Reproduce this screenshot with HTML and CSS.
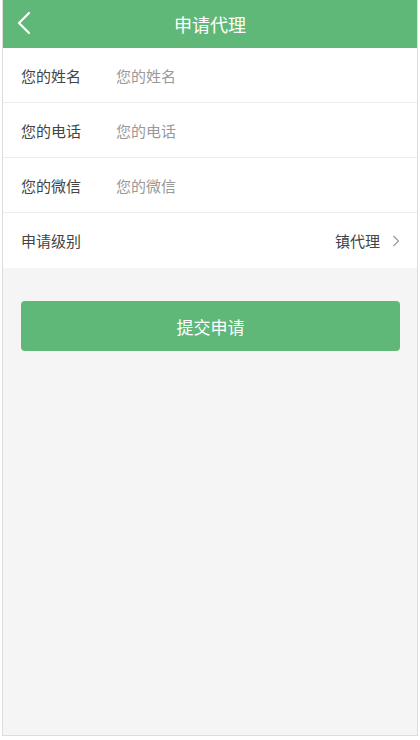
FILE: index.html
```html
<!DOCTYPE html>
<html lang="zh-CN">
<head>
<meta charset="utf-8">
<title>申请代理</title>
<link rel="stylesheet" href="styles.css">
</head>
<body>
<div class="page">
  <header class="topbar">
    <a class="back" aria-label="返回">
      <svg width="14" height="24" viewBox="0 0 14 24"><path d="M12 2 L2 12 L12 22" fill="none" stroke="#fff" stroke-width="2.2" stroke-linecap="round" stroke-linejoin="round"/></svg>
    </a>
    <h1 class="title">申请代理</h1>
  </header>
  <div class="form">
    <div class="row"><span class="label">您的姓名</span><span class="ph">您的姓名</span></div>
    <div class="row"><span class="label">您的电话</span><span class="ph">您的电话</span></div>
    <div class="row"><span class="label">您的微信</span><span class="ph">您的微信</span></div>
    <div class="row last"><span class="label">申请级别</span><span class="value">镇代理</span>
      <svg class="arrow" width="8" height="12" viewBox="0 0 8 12"><path d="M1.5 1 L6.5 6 L1.5 11" fill="none" stroke="#999" stroke-width="1.2"/></svg>
    </div>
  </div>
  <div class="actions">
    <button class="submit">提交申请</button>
  </div>
</div>
</body>
</html>
```
FILE: styles.css
```css
html, body {
  margin: 0;
  padding: 0;
  background: #fff;
}
body {
  font-family: "Microsoft YaHei", "Noto Sans CJK SC", "Noto Sans", sans-serif;
}
.page {
  margin: 0 2px;
  border: 1px solid #ddd;
  border-top: none;
  box-sizing: border-box;
  height: 736px;
  background: #f5f5f5;
}
.topbar {
  position: relative;
  height: 48px;
  background: #5fb878;
  display: flex;
  align-items: center;
  justify-content: center;
}
.back {
  position: absolute;
  left: 14px;
  top: 11px;
  display: block;
}
.title {
  margin: 0;
  font-size: 18px;
  font-weight: normal;
  color: #fff;
}
.form {
  background: #fff;
}
.row {
  height: 55px;
  box-sizing: border-box;
  border-bottom: 1px solid #ececec;
  display: flex;
  align-items: center;
  padding: 0 17px 0 18px;
  font-size: 15px;
}
.row.last {
  border-bottom: none;
}
.label {
  width: 95px;
  color: #444;
}
.ph {
  color: #999;
}
.value {
  margin-left: auto;
  color: #444;
}
.arrow {
  margin-left: 12px;
}
.actions {
  padding: 33px 17px 0 18px;
}
.submit {
  display: block;
  width: 100%;
  height: 50px;
  border: none;
  border-radius: 4px;
  background: #5fb878;
  color: #fff;
  font-family: inherit;
  font-size: 17px;
}
```
